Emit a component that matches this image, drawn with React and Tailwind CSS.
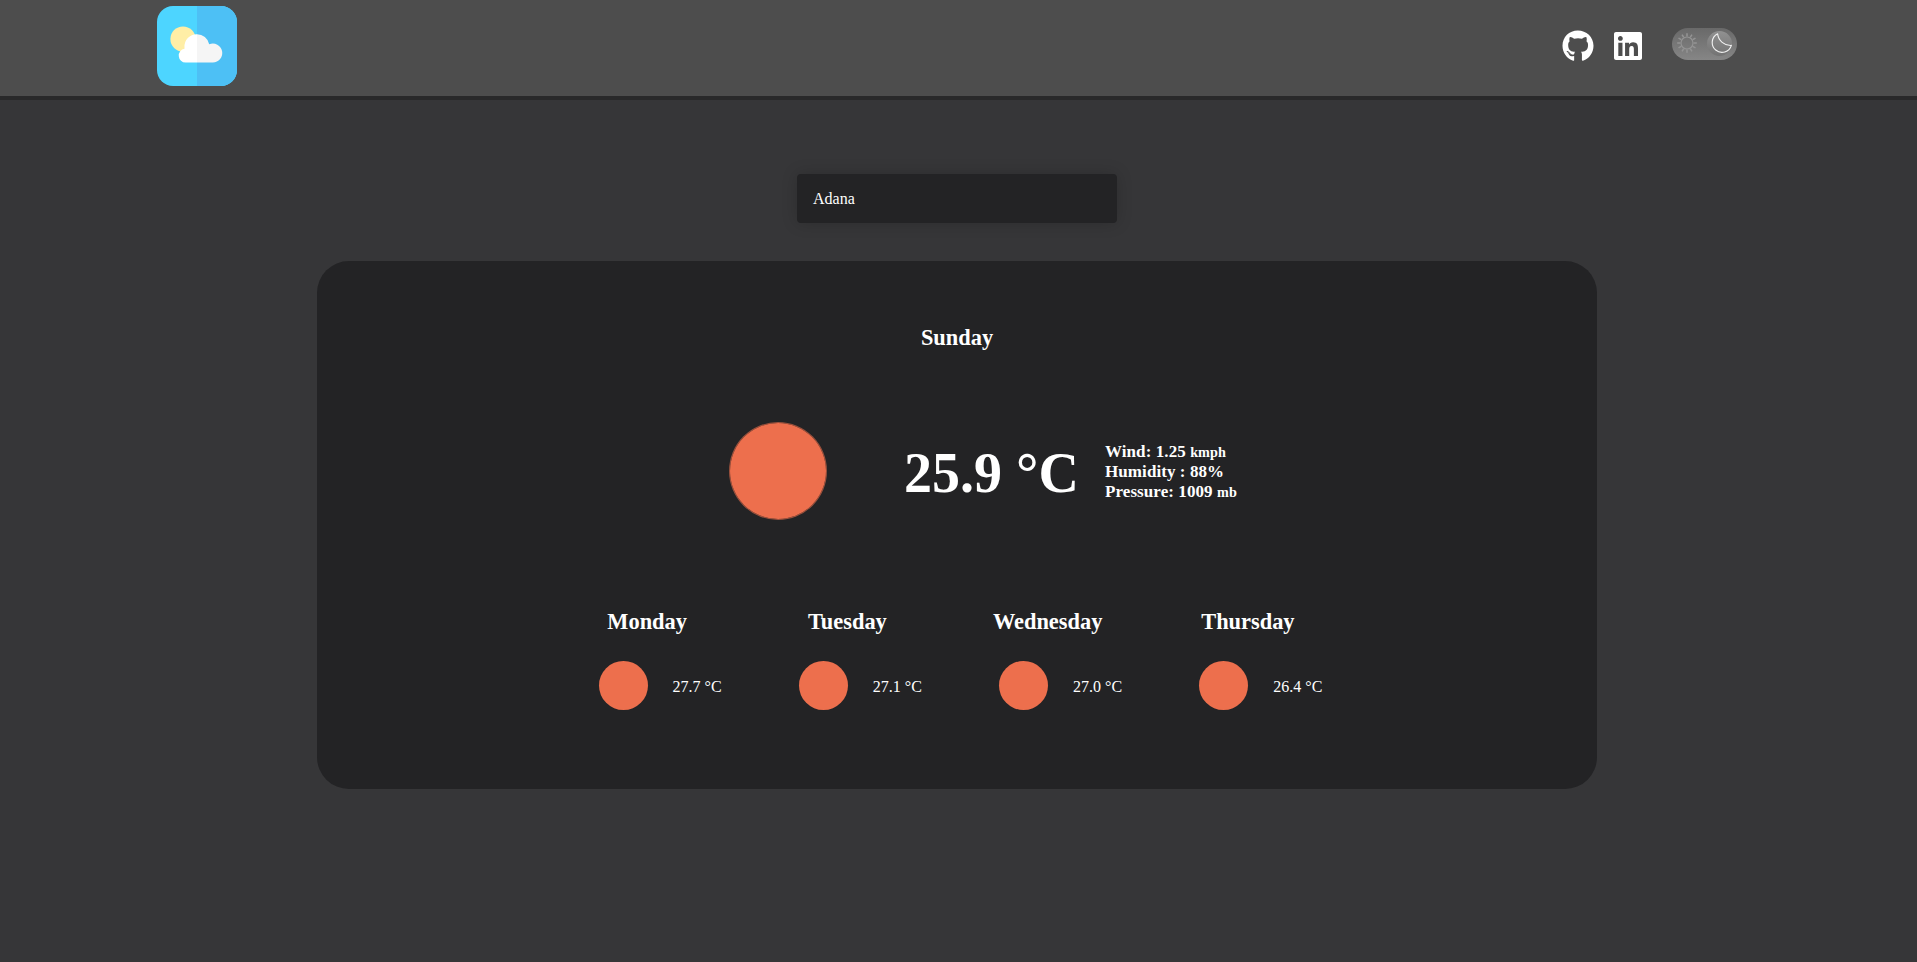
import { FaGithub, FaLinkedin } from "react-icons/fa";

const days = [
  { name: "Monday", temp: "27.7 °C" },
  { name: "Tuesday", temp: "27.1 °C" },
  { name: "Wednesday", temp: "27.0 °C" },
  { name: "Thursday", temp: "26.4 °C" },
];

function Logo() {
  return (
    <svg className="block size-20" viewBox="0 0 80 80">
      <rect width="80" height="80" rx="16" fill="#4dd5ff" />
      <path d="M40 0H64A16 16 0 0 1 80 16V64A16 16 0 0 1 64 80H40Z" fill="#4dc0f5" />
      <circle cx="26" cy="33" r="12.6" fill="#ffeea6" />
      <path d="M40 28.2A12.3 12.3 0 0 0 27.5 41.5V42.8A6.9 6.9 0 0 0 28.6 56.5H40Z" fill="#fff" />
      <path d="M40 28.2A12.6 12.6 0 0 1 52.2 38.2A9.5 9.5 0 1 1 55.8 56.5H40Z" fill="#f5f5f5" />
    </svg>
  );
}

const rays = [0, 30, 60, 90, 120, 150, 180, 210, 240, 270, 300, 330];

function ThemeSwitch() {
  return (
    <button className="flex h-8 w-[65px] items-start justify-between rounded-full bg-linear-to-b from-[#696969] to-[#868686] pt-[3px] pr-[5px] pl-[5px]">
      <svg className="mt-0.5 block size-5" viewBox="0 0 20 20" fill="none" stroke="#949494">
        <circle cx="10" cy="10" r="6" strokeWidth="1.2" />
        {rays.map((a) => (
          <path key={a} d="M10 3.4V0.2" strokeWidth="1.5" transform={`rotate(${a} 10 10)`} />
        ))}
      </svg>
      <span className="flex size-[25px] items-center justify-center rounded-full bg-linear-to-b from-[#919191] to-[#737373]">
        <svg className="block size-[25px]" viewBox="0 0 25 25" fill="none" stroke="#f2f2f2" strokeWidth="1.1" strokeLinejoin="round">
          <path d="M10.6 2.8A9.8 9.8 0 1 0 24.4 14.4A13 13 0 0 1 10.6 2.8Z" />
        </svg>
      </span>
    </button>
  );
}

export default function App() {
  return (
    <div className="min-h-screen bg-[#363638] font-['Liberation_Serif',serif] text-base text-white">
      <header className="flex h-24 items-start justify-between bg-[#4d4d4d] pt-1.5 pr-[180px] pl-[157px] shadow-[0_4px_0_#29292a]">
        <Logo />
        <nav className="flex items-start pt-[22px]">
          <FaGithub className="mt-[1.5px] mr-[18px] size-8" />
          <FaLinkedin className="mt-0.5 mr-7 size-8" />
          <ThemeSwitch />
        </nav>
      </header>
      <main className="flex flex-col items-center pt-[78px] pr-[3px]">
        <div className="flex h-[49px] w-80 items-center rounded bg-[#232325] px-4 pt-px shadow-[0_0_16px_rgba(0,0,0,0.18)]">
          Adana
        </div>
        <section className="mt-[38px] flex h-[528px] w-[1280px] flex-col items-center rounded-[32px] bg-[#232325]">
          <h2 className="mt-[63px] h-7 text-[22.4px] leading-7 font-bold">Sunday</h2>
          <div className="mt-[70px] ml-[54px] flex h-[98px] items-center">
            <div className="size-[98px] rounded-full border border-[#ed6f4d]/60 bg-[#ed6f4d] bg-clip-padding" />
            <div className="ml-[77px] w-[201px] pt-1 text-[56px] leading-[64px] font-bold whitespace-nowrap">25.9 °C</div>
            <div className="w-[134px] pt-0.5 text-[17px] leading-5 font-bold tracking-[0.08px] whitespace-nowrap">
              <p>Wind: 1.25 <small className="text-[14.2px]">kmph</small></p>
              <p>Humidity : 88%</p>
              <p>Pressure: 1009 <small className="text-[14.2px]">mb</small></p>
            </div>
          </div>
          <div className="mt-[88px] mr-[19px] grid w-[801px] grid-cols-4">
            {days.map((d) => (
              <div key={d.name} className="flex flex-col items-center">
                <h3 className="h-7 text-[22.4px] leading-7 font-bold">{d.name}</h3>
                <div className="mt-[25px] flex items-center pl-[26px]">
                  <div className="size-[49px] rounded-full bg-[#ed6f4d]" />
                  <span className="ml-[25px] pt-0.5">{d.temp}</span>
                </div>
              </div>
            ))}
          </div>
        </section>
      </main>
    </div>
  );
}
